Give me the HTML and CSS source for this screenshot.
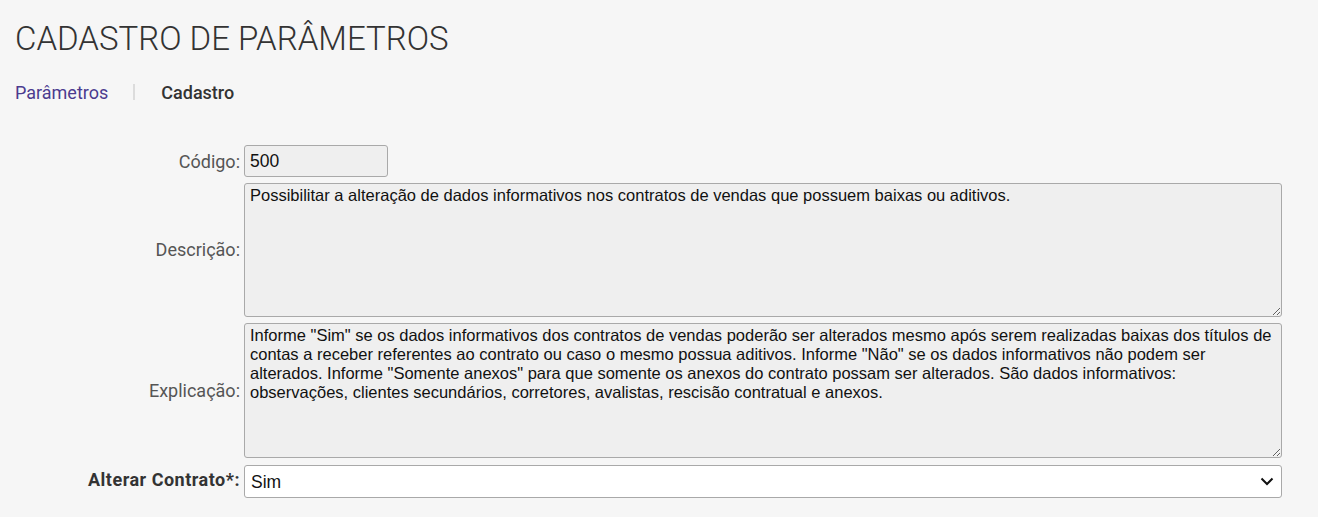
FILE: index.html
```html
<!DOCTYPE html>
<html lang="pt-BR">
<head>
<meta charset="utf-8">
<title>Cadastro de Parâmetros</title>
<link rel="stylesheet" href="styles.css">
</head>
<body>
<div class="page">
  <h1 class="title">CADASTRO DE PARÂMETROS</h1>
  <nav class="crumbs">
    <a class="crumb-link" href="#">Parâmetros</a>
    <span class="crumb-sep"></span>
    <span class="crumb-current">Cadastro</span>
  </nav>
  <form class="form">
    <label class="lbl lbl-code">Código:</label>
    <input class="field code" type="text" value="500" readonly>
    <label class="lbl lbl-area">Descrição:</label>
    <textarea class="field area area-desc" readonly>Possibilitar a alteração de dados informativos nos contratos de vendas que possuem baixas ou aditivos.</textarea>
    <label class="lbl lbl-area">Explicação:</label>
    <textarea class="field area area-expl" readonly>Informe "Sim" se os dados informativos dos contratos de vendas poderão ser alterados mesmo após serem realizadas baixas dos títulos de contas a receber referentes ao contrato ou caso o mesmo possua aditivos. Informe "Não" se os dados informativos não podem ser alterados. Informe "Somente anexos" para que somente os anexos do contrato possam ser alterados. São dados informativos: observações, clientes secundários, corretores, avalistas, rescisão contratual e anexos.</textarea>
    <label class="lbl lbl-bold">Alterar Contrato*:</label>
    <div class="select-wrap">
      <select class="field select">
        <option>Sim</option>
        <option>Não</option>
        <option>Somente anexos</option>
      </select>
      <svg class="chev" width="14" height="9" viewBox="0 0 14 9"><path d="M1.5 1.5 L7 7 L12.5 1.5" fill="none" stroke="#111" stroke-width="2"/></svg>
    </div>
  </form>
</div>
</body>
</html>
```

FILE: styles.css
```css
html, body {
  margin: 0;
  padding: 0;
  background: #f6f6f6;
}
.page {
  padding: 0 15px;
  font-family: Roboto, "Liberation Sans", sans-serif;
}
.title {
  margin: 0;
  padding-top: 20px;
  font-size: 33px;
  font-weight: 300;
  color: #333;
  line-height: 38px;
  letter-spacing: 0;
}
.crumbs {
  display: flex;
  align-items: center;
  margin-top: 22px;
  height: 24px;
  font-size: 18px;
}
.crumb-link {
  color: #4b3b8f;
  text-decoration: none;
}
.crumb-sep {
  width: 2px;
  height: 16px;
  background: #dcdcdc;
  margin: 0 26px 0 25px;
}
.crumb-current {
  color: #333;
  font-weight: 500;
}
.form {
  display: grid;
  grid-template-columns: 225px 1038px;
  column-gap: 4px;
  margin-top: 41px;
}
.lbl {
  justify-self: end;
  align-self: center;
  font-size: 18px;
  color: #555;
}
.lbl-area {
  padding-top: 5px;
}
.lbl-bold {
  font-weight: 700;
  color: #333;
  letter-spacing: 0.5px;
  padding-top: 2px;
}
.field {
  box-sizing: border-box;
  border: 1px solid #a9a9a9;
  border-radius: 3px;
  background: #efefef;
  font-family: "Liberation Sans", Arial, sans-serif;
  font-size: 16.5px;
  color: #111;
  margin: 0;
  outline: none;
}
.code {
  width: 144px;
  height: 32px;
  padding: 0 5px;
  font-size: 17.5px;
}
.area {
  width: 1038px;
  padding: 2px 5px;
  line-height: 19px;
  resize: vertical;
  margin-top: 6px;
}
.area-desc {
  height: 134px;
}
.area-expl {
  height: 135px;
}
.select-wrap {
  position: relative;
  margin-top: 7px;
}
.select {
  appearance: none;
  -webkit-appearance: none;
  width: 1038px;
  height: 33px;
  background: #fff;
  padding: 0 6px;
  font-size: 17.5px;
}
.chev {
  position: absolute;
  right: 8px;
  top: 12px;
  pointer-events: none;
}
```
